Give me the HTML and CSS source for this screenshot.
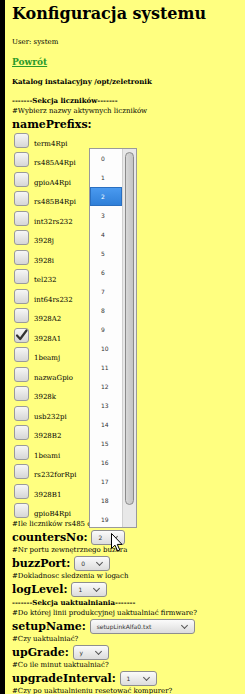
FILE: index.html
```html
<!DOCTYPE html>
<html lang="pl">
<head>
    <meta charset="UTF-8">
    <meta name="viewport" content="width=device-width, initial-scale=1.0">
    <title>Konfiguracja systemu</title>
    <link rel="stylesheet" href="styles.css">
</head>
<body>

    <div class="page">
        <h1>Konfiguracja systemu</h1>
        <p class="user">User: system</p>
        <a class="back" href="#">Powrót</a>
        <p class="dir">Katalog instalacyjny /opt/zeletronik</p>

        <!-- Sekcja licznikow -->
        <p class="section">-------Sekcja liczników-------</p>
        <p class="comment">#Wybierz nazwy aktywnych liczników</p>
        <p class="key">namePrefixs:</p>
        <div class="checks">
            <label class="check"><span class="box"></span>term4Rpi</label>
            <label class="check"><span class="box"></span>rs485A4Rpi</label>
            <label class="check"><span class="box"></span>gpioA4Rpi</label>
            <label class="check"><span class="box"></span>rs485B4Rpi</label>
            <label class="check"><span class="box"></span>int32rs232</label>
            <label class="check"><span class="box"></span>3928j</label>
            <label class="check"><span class="box"></span>3928i</label>
            <label class="check"><span class="box"></span>tel232</label>
            <label class="check"><span class="box"></span>int64rs232</label>
            <label class="check"><span class="box"></span>3928A2</label>
            <label class="check"><span class="box checked"><svg viewBox="0 0 15 15" width="15" height="15"><path d="M3 7.5 L6.2 11 L12.5 2.5" fill="none" stroke="#333" stroke-width="2.2" stroke-linecap="round" stroke-linejoin="round"/></svg></span>3928A1</label>
            <label class="check"><span class="box"></span>1beamj</label>
            <label class="check"><span class="box"></span>nazwaGpio</label>
            <label class="check"><span class="box"></span>3928k</label>
            <label class="check"><span class="box"></span>usb232pi</label>
            <label class="check"><span class="box"></span>3928B2</label>
            <label class="check"><span class="box"></span>1beami</label>
            <label class="check"><span class="box"></span>rs232forRpi</label>
            <label class="check"><span class="box"></span>3928B1</label>
            <label class="check"><span class="box"></span>gpioB4Rpi</label>
        </div>

        <p class="comment after-checks">#Ile liczników rs485 obsługiwać</p>
        <p class="key">countersNo: <span class="select w34">2</span></p>
        <p class="comment">#Nr portu zewnętrznego buzera</p>
        <p class="key">buzzPort: <span class="select w36">0</span></p>
        <p class="comment">#Dokladnosc sledzenia w logach</p>
        <p class="key">logLevel: <span class="select w36">1</span></p>

        <!-- Sekcja uaktualniania -->
        <p class="section">-------Sekcja uaktualniania-------</p>
        <p class="comment">#Do której linii produkcyjnej uaktualniać firmware?</p>
        <p class="key">setupName: <span class="select w105">setupLinkAlfa0.txt</span></p>
        <p class="comment">#Czy uaktualniać?</p>
        <p class="key">upGrade: <span class="select w36">y</span></p>
        <p class="comment">#Co ile minut uaktualniać?</p>
        <p class="key">upgradeInterval: <span class="select w37">1</span></p>
        <p class="comment">#Czy po uaktualnieniu resetować kompurer?</p>
    </div>

    <!-- open dropdown of countersNo -->
    <div class="dropdown">
        <ul class="options">
            <li>0</li><li>1</li><li class="active">2</li><li>3</li><li>4</li>
            <li>5</li><li>6</li><li>7</li><li>8</li><li>9</li>
            <li>10</li><li>11</li><li>12</li><li>13</li><li>14</li>
            <li>15</li><li>16</li><li>17</li><li>18</li><li>19</li>
        </ul>
        <div class="scroll"><div class="thumb"></div></div>
    </div>

    <svg class="cursor" viewBox="0 0 12 19" width="12" height="19">
        <path d="M0.5 0.5 L0.5 15.5 L4 12.2 L6.6 18 L8.8 17 L6.3 11.4 L11 11.4 Z" fill="#fff" stroke="#000" stroke-width="1"/>
    </svg>

</body>
</html>
```

FILE: styles.css
```css
body {
    margin: 0;
    background-color: #ffff80;
    font-family: "DejaVu Serif", serif;
    color: #000;
}

.page {
    border-left: 5px solid #000;
    padding: 3px 0 0 7px;
    min-height: 694px;
    box-sizing: border-box;
}

p {
    margin: 0;
}

h1 {
    font-size: 16px;
    margin: 0 0 12px 0;
    line-height: 22px;
}

.user {
    font-size: 7px;
    line-height: 10px;
    margin-bottom: 9px;
}

.back {
    display: block;
    font-size: 9px;
    font-weight: bold;
    color: #2a9a2a;
    line-height: 12px;
    margin-bottom: 9px;
}

.dir {
    font-weight: bold;
    font-size: 7px;
    line-height: 10px;
    margin-bottom: 8px;
}

.section {
    font-weight: bold;
    font-size: 7px;
    line-height: 11px;
}

.comment {
    font-size: 7px;
    line-height: 11px;
}

.key {
    font-weight: bold;
    font-size: 11px;
    line-height: 15px;
}

.checks {
    padding-left: 2px;
    margin-top: -4px;
}

.check {
    display: flex;
    align-items: flex-end;
    height: 19.5px;
    font-size: 7px;
    line-height: 8px;
}

.after-checks {
    margin-top: 1px;
}

.box {
    width: 15px;
    height: 15px;
    box-sizing: border-box;
    border: 1px solid #9a9a9a;
    border-radius: 3px;
    background: linear-gradient(#f6f6f6, #d6d6d6);
    margin-right: 5px;
    flex-shrink: 0;
}

.box svg {
    display: block;
    margin: -1px;
}

.select {
    display: inline-block;
    position: relative;
    vertical-align: 1px;
    height: 15px;
    line-height: 13px;
    box-sizing: border-box;
    border: 1px solid #8e8e8e;
    border-radius: 3px;
    background: linear-gradient(#fbfbfb, #dcdcdc);
    font-family: "DejaVu Sans", sans-serif;
    font-weight: normal;
    font-size: 6px;
    padding-left: 6px;
    color: #333;
}

.select::after {
    content: "";
    position: absolute;
    right: 7px;
    top: 3px;
    width: 4px;
    height: 4px;
    border-right: 1.5px solid #555;
    border-bottom: 1.5px solid #555;
    transform: rotate(45deg);
}

.w34 { width: 34px; }
.w36 { width: 36px; }
.w37 { width: 37px; }
.w105 { width: 105px; }

.dropdown {
    position: absolute;
    left: 89px;
    top: 148px;
    width: 48px;
    height: 380px;
    box-sizing: border-box;
    border: 1px solid #9a9a9a;
    background: #fdfdfd;
    display: flex;
}

.options {
    list-style: none;
    margin: 0;
    padding: 0;
    flex: 1;
    font-family: "DejaVu Sans", sans-serif;
    font-size: 6px;
    color: #333;
}

.options li {
    height: 19px;
    line-height: 19px;
    padding-left: 11px;
}

.options li.active {
    background: linear-gradient(#4a9af0, #2f7fd8);
    color: #fff;
    border: 1px solid #2a6fc0;
    line-height: 17px;
    box-sizing: border-box;
    padding-left: 10px;
}

.scroll {
    width: 14px;
    background: #e8e8e8;
    border-left: 1px solid #d0d0d0;
    padding: 3px 2px;
    box-sizing: border-box;
}

.thumb {
    height: 351px;
    border: 1px solid #8a8a8a;
    border-radius: 5px;
    background: linear-gradient(to right, #d8d8d8, #c4c4c4);
}

.cursor {
    position: absolute;
    left: 111px;
    top: 533px;
}
```
